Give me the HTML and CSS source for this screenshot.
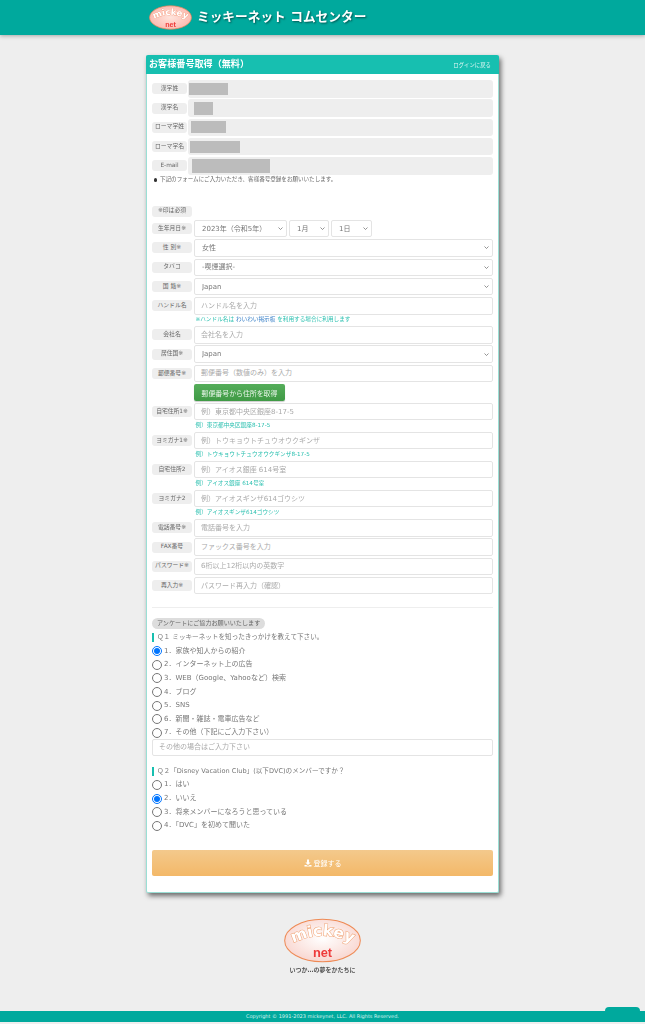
FILE: index.html
```html
<!DOCTYPE html>
<html lang="ja">
<head>
<meta charset="utf-8">
<title>ミッキーネット コムセンター</title>
<link rel="stylesheet" href="styles.css">
</head>
<body>
<header class="topbar">
  <div class="topbar-inner">
    <svg class="logo-small" viewBox="0 0 228 130" aria-hidden="true">
      <defs>
        <radialGradient id="gs" cx="50%" cy="50%" r="60%"><stop offset="0" stop-color="#ffe4dc"/><stop offset="1" stop-color="#fbb4aa"/></radialGradient>
        <path id="arcs" d="M14 80 Q112 22 214 80"/>
      </defs>
      <ellipse cx="114" cy="65" rx="111" ry="62" fill="url(#gs)" stroke="#e8855a" stroke-width="4"/>
      <text class="logo-word" font-size="46" fill="#fff" stroke="#f39a78" stroke-width="3"><textPath href="#arcs" startOffset="50%" text-anchor="middle">mickey</textPath></text>
      <text class="logo-net" x="114" y="114" font-size="38" text-anchor="middle" fill="#ee3b3b">net</text>
    </svg>
    <h1 class="site-title">ミッキーネット コムセンター</h1>
  </div>
</header>

<main class="card">
  <div class="card-head">
    <h2 class="card-title">お客様番号取得（無料）</h2>
    <a class="back-link">ログインに戻る</a>
  </div>
  <div class="card-body">
    <div class="info-list">
      <div class="info-row"><span class="tag tag-short">漢字姓</span><div class="info-field"><span class="mask m1"></span></div></div>
      <div class="info-row"><span class="tag tag-short">漢字名</span><div class="info-field"><span class="mask m2"></span></div></div>
      <div class="info-row"><span class="tag tag-short">ローマ字姓</span><div class="info-field"><span class="mask m3"></span></div></div>
      <div class="info-row"><span class="tag tag-short">ローマ字名</span><div class="info-field"><span class="mask m4"></span></div></div>
      <div class="info-row"><span class="tag tag-short">E-mail</span><div class="info-field"><span class="mask m5"></span></div></div>
    </div>
    <p class="lead"><span class="dot"></span>下記のフォームにご入力いただき、客様番号登録をお願いいたします。</p>

    <span class="tag tag-required">※印は必須</span>

    <div class="form-list">
      <div class="row"><span class="tag">生年月日※</span>
        <select class="ctl w-year"><option>2023年（令和5年）</option></select>
        <select class="ctl w-month"><option>1月</option></select>
        <select class="ctl w-day"><option>1日</option></select>
      </div>
      <div class="row"><span class="tag">性 別※</span><select class="ctl grow"><option>女性</option></select></div>
      <div class="row"><span class="tag">タバコ</span><select class="ctl grow"><option>-喫煙選択-</option></select></div>
      <div class="row"><span class="tag">国 籍※</span><select class="ctl grow"><option>Japan</option></select></div>
      <div class="row"><span class="tag">ハンドル名</span><input class="ctl grow" placeholder="ハンドル名を入力"></div>
      <p class="hint">※ハンドル名は <span class="hint-link">わいわい掲示板</span> を利用する場合に利用します</p>
      <div class="row"><span class="tag">会社名</span><input class="ctl grow" placeholder="会社名を入力"></div>
      <div class="row"><span class="tag">居住国※</span><select class="ctl grow"><option>Japan</option></select></div>
      <div class="row"><span class="tag">郵便番号※</span><input class="ctl grow" placeholder="郵便番号（数値のみ）を入力"></div>
      <div class="row row-btn"><button class="zip-btn" type="button">郵便番号から住所を取得</button></div>
      <div class="row"><span class="tag">自宅住所1※</span><input class="ctl grow" placeholder="例）東京都中央区銀座8-17-5"></div>
      <p class="hint">例）東京都中央区銀座8-17-5</p>
      <div class="row"><span class="tag">ヨミガナ1※</span><input class="ctl grow" placeholder="例）トウキョウトチュウオウクギンザ"></div>
      <p class="hint">例）トウキョウトチュウオウクギンザ8-17-5</p>
      <div class="row"><span class="tag">自宅住所2</span><input class="ctl grow" placeholder="例）アイオス銀座 614号室"></div>
      <p class="hint">例）アイオス銀座 614号室</p>
      <div class="row"><span class="tag">ヨミガナ2</span><input class="ctl grow" placeholder="例）アイオスギンザ614ゴウシツ"></div>
      <p class="hint">例）アイオスギンザ614ゴウシツ</p>
      <div class="row"><span class="tag">電話番号※</span><input class="ctl grow" placeholder="電話番号を入力"></div>
      <div class="row"><span class="tag">FAX番号</span><input class="ctl grow" placeholder="ファックス番号を入力"></div>
      <div class="row"><span class="tag">パスワード※</span><input class="ctl grow" placeholder="6桁以上12桁以内の英数字"></div>
      <div class="row"><span class="tag">再入力※</span><input class="ctl grow" placeholder="パスワード再入力（確認）"></div>
    </div>

    <hr class="divider">

    <span class="survey-pill">アンケートにご協力お願いいたします</span>
    <p class="question">Ｑ１ ミッキーネットを知ったきっかけを教えて下さい。</p>
    <div class="radios">
      <label class="radio"><input type="radio" name="q1" checked>1．家族や知人からの紹介</label>
      <label class="radio"><input type="radio" name="q1">2．インターネット上の広告</label>
      <label class="radio"><input type="radio" name="q1">3．WEB（Google、Yahooなど）検索</label>
      <label class="radio"><input type="radio" name="q1">4．ブログ</label>
      <label class="radio"><input type="radio" name="q1">5．SNS</label>
      <label class="radio"><input type="radio" name="q1">6．新聞・雑誌・電車広告など</label>
      <label class="radio"><input type="radio" name="q1">7．その他（下記にご入力下さい）</label>
    </div>
    <input class="ctl other" placeholder="その他の場合はご入力下さい">

    <p class="question q2">Ｑ２「Disney Vacation Club」(以下DVC)のメンバーですか？</p>
    <div class="radios">
      <label class="radio"><input type="radio" name="q2">1．はい</label>
      <label class="radio"><input type="radio" name="q2" checked>2．いいえ</label>
      <label class="radio"><input type="radio" name="q2">3．将来メンバーになろうと思っている</label>
      <label class="radio"><input type="radio" name="q2">4．「DVC」を初めて聞いた</label>
    </div>

    <button class="submit" type="button">
      <svg class="submit-icon" viewBox="0 0 16 16" aria-hidden="true"><path d="M6 1h4v6h3.2L8 12 2.8 7H6z"/><path d="M1 12h3.4L8 14l3.6-2H15v3H1z"/></svg>
      登録する
    </button>
  </div>
</main>

<section class="brand">
  <svg class="logo-large" viewBox="0 0 228 130" aria-hidden="true">
    <defs>
      <radialGradient id="gl" cx="50%" cy="45%" r="62%"><stop offset="0" stop-color="#fff"/><stop offset="1" stop-color="#f8d2cb"/></radialGradient>
      <path id="arcl" d="M14 80 Q112 22 214 80"/>
    </defs>
    <ellipse cx="114" cy="65" rx="112" ry="63" fill="url(#gl)" stroke="#ee8a55" stroke-width="3"/>
    <text class="logo-word" font-size="46" fill="#fff" stroke="#f0a070" stroke-width="3"><textPath href="#arcl" startOffset="50%" text-anchor="middle">mickey</textPath></text>
    <text class="logo-net" x="114" y="114" font-size="38" text-anchor="middle" fill="#ee3b3b">net</text>
  </svg>
  <p class="slogan">いつか…の夢をかたちに</p>
</section>

<footer class="footer">
  <span class="page-tab"></span>
  <p class="copyright">Copyright © 1991-2023 mickeynet, LLC. All Rights Reserved.</p>
</footer>
</body>
</html>
```

FILE: styles.css
```css
* { box-sizing: border-box; }
html, body { margin: 0; padding: 0; }
body {
  width: 645px;
  height: 1024px;
  overflow: hidden;
  background: #eee;
  color: #777;
  font-family: "DejaVu Sans", "Noto Sans CJK JP", sans-serif;
  font-size: 7px;
  filter: blur(0.35px);
}
p, h1, h2 { margin: 0; font-weight: normal; }

/* top bar */
.topbar {
  height: 35px;
  background: #00a99d;
  box-shadow: 0 1px 4px rgba(0, 0, 0, .3);
}
.topbar-inner {
  display: flex;
  align-items: center;
  gap: 5px;
  height: 34px;
  padding-left: 149px;
}
.logo-small { width: 43px; height: 25px; }
.logo-word { font-family: "DejaVu Sans", sans-serif; font-weight: bold; paint-order: stroke; }
.logo-net { font-family: "Liberation Sans", sans-serif; font-weight: bold; }
.site-title {
  color: #fff;
  font-size: 12.7px;
  font-weight: bold;
  line-height: 1;
  text-shadow: 1px 1px 2px rgba(0, 0, 0, .5);
}

/* card */
.card {
  width: 353px;
  height: 838px;
  margin: 20px 0 0 146px;
  background: #fff;
  border: 1px solid #9adfd5;
  border-top: 0;
  border-radius: 2px;
  box-shadow: 2px 3px 5px rgba(0, 0, 0, .55);
}
.card-head {
  display: flex;
  justify-content: space-between;
  align-items: center;
  height: 19px;
  margin: 0 -1px;
  padding: 0 8px 0 3px;
  background: #17bfb0;
  border-radius: 2px 2px 0 0;
}
.card-title { color: #fff; font-size: 9.1px; font-weight: bold; line-height: 1; }
.back-link { color: #e3f7f4; font-size: 5.4px; }
.card-body { padding: 6px 5px 0 5px; }

/* fixed info */
.info-list { display: flex; flex-direction: column; gap: 1.75px; }
.info-row { display: flex; align-items: center; gap: 1px; height: 17.5px; }
.tag {
  display: inline-flex;
  flex: none;
  align-items: center;
  justify-content: center;
  width: 40px;
  height: 11px;
  background: #eee;
  border-radius: 3px;
  color: #666;
  font-size: 5.8px;
  line-height: 1;
  white-space: nowrap;
}
.tag-short { width: 35px; }
.info-field {
  display: flex;
  align-items: center;
  flex: 1;
  height: 100%;
  background: #eee;
  border-radius: 3px;
}
.mask { display: block; background: #bcbcbc; }
.m1 { width: 39px; height: 12px; margin-left: 1px; }
.m2 { width: 19px; height: 13px; margin-left: 6px; }
.m3 { width: 35px; height: 12px; margin-left: 3px; }
.m4 { width: 50px; height: 12px; margin-left: 2px; }
.m5 { width: 78px; height: 14px; margin-left: 4px; }
.lead {
  display: flex;
  align-items: center;
  height: 8px;
  margin-top: 1.5px;
  color: #666;
  font-size: 5.55px;
  line-height: 1;
}
.dot { width: 3.5px; height: 3.5px; margin: 0 3px 0 1.5px; background: #333; border-radius: 50%; }
.tag-required { margin-top: 22px; height: 10.5px; }

/* form */
.form-list { display: flex; flex-direction: column; margin-top: 3.5px; }
.row { display: flex; align-items: center; gap: 2px; height: 17.4px; margin-bottom: 1.9px; }
.row-btn { padding-left: 42px; margin-bottom: 1.4px; }
.ctl {
  height: 17.4px;
  min-width: 0;
  padding: 0 5px 0 6px;
  background-color: #fff;
  border: 1px solid #e4e4e4;
  border-radius: 2px;
  color: #777;
  font-family: inherit;
  font-size: 7px;
  outline: 0;
}
.ctl::placeholder { color: #aaa; opacity: 1; }
select.ctl {
  padding-left: 7px;
  appearance: none;
  background-image: url("data:image/svg+xml,%3Csvg xmlns='http://www.w3.org/2000/svg' viewBox='0 0 10 6'%3E%3Cpath d='M1 1l4 4 4-4' fill='none' stroke='%23666' stroke-width='1.4'/%3E%3C/svg%3E");
  background-repeat: no-repeat;
  background-position: right 3.5px center;
  background-size: 5px 3px;
}
.grow { flex: 1; }
.w-year { width: 93px; }
.w-month { width: 40px; }
.w-day { width: 41px; }
.hint {
  height: 9.8px;
  margin: -1.5px 0 1.5px 43.5px;
  color: #2cc0b0;
  font-size: 5.65px;
  line-height: 9.8px;
  white-space: nowrap;
}
.hint-link { color: #3a80c8; }
.zip-btn {
  width: 91px;
  height: 17.4px;
  padding: 0;
  background: linear-gradient(#55ad5a, #3f9a45);
  border: 0;
  border-radius: 2px;
  box-shadow: 0 1px 1px rgba(0, 0, 0, .2);
  color: #e8f5e9;
  font-family: inherit;
  font-size: 6.9px;
}
.divider { height: 1px; margin: 10.5px 0 10.5px; background: #eee; border: 0; }

/* survey */
.survey-pill {
  display: inline-block;
  height: 10.5px;
  padding: 0 5px;
  background: #ddd;
  border-radius: 6px;
  color: #666;
  font-size: 6.1px;
  line-height: 10.5px;
  vertical-align: top;
}
.question {
  height: 9px;
  margin-top: 4px;
  padding-left: 3px;
  border-left: 2.5px solid #17bfb0;
  color: #777;
  font-size: 6.6px;
  line-height: 9px;
  white-space: nowrap;
}
.q2 { margin-top: 10.5px; }
.radios { display: flex; flex-direction: column; margin-top: 2.5px; }
.radio { display: flex; align-items: center; height: 13.65px; color: #777; font-size: 7px; line-height: 1; white-space: nowrap; }
.radio input { flex: none; width: 10px; height: 10px; margin: 0 2px 0 0; }
.other { display: block; width: 100%; margin-top: -1px; }
.submit {
  display: flex;
  align-items: center;
  justify-content: center;
  gap: 2px;
  width: 100%;
  height: 26px;
  margin-top: 17px;
  background: linear-gradient(#f3c98c, #f3b868);
  border: 0;
  border-radius: 2px;
  color: #fff;
  font-family: inherit;
  font-size: 7px;
}
.submit-icon { width: 8px; height: 8px; fill: #fff; }

/* brand */
.brand { display: flex; flex-direction: column; align-items: center; margin-top: 25px; }
.logo-large { width: 77px; height: 45px; }
.slogan { margin-top: 3px; color: #555; font-size: 6px; font-weight: bold; line-height: 7px; }

/* footer */
.footer {
  position: relative;
  height: 11px;
  margin-top: 38px;
  background: #00a99d;
}
.page-tab {
  position: absolute;
  right: 5px;
  bottom: 11px;
  width: 35px;
  height: 4px;
  background: #00a99d;
  border-radius: 4px 4px 0 0;
}
.copyright { color: #d8f3ef; font-size: 5px; line-height: 11px; text-align: center; }
```
